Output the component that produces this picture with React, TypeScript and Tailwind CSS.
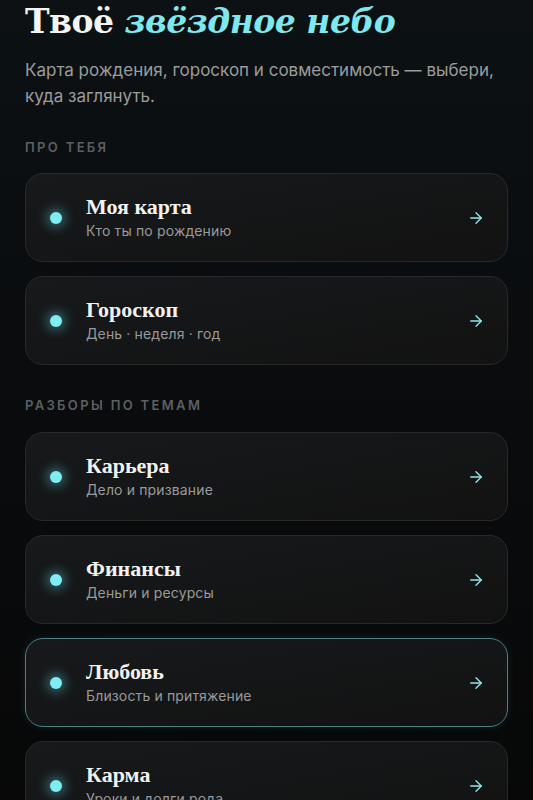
import { ArrowRight } from "lucide-react";

type Item = { title: string; sub: string; active?: boolean };

const aboutYou: Item[] = [
  { title: "Моя карта", sub: "Кто ты по рождению" },
  { title: "Гороскоп", sub: "День · неделя · год" },
];

const topics: Item[] = [
  { title: "Карьера", sub: "Дело и призвание" },
  { title: "Финансы", sub: "Деньги и ресурсы" },
  { title: "Любовь", sub: "Близость и притяжение", active: true },
  { title: "Карма", sub: "Уроки и долги рода" },
];

const serif = "font-['Liberation_Serif',_'Times_New_Roman',_serif]";

const Card = ({ item }: { item: Item }) => (
  <div
    className={
      "flex h-[89px] items-center rounded-[18px] bg-gradient-to-br from-[#17191b] to-[#121212] pl-6 pr-[22px] " +
      (item.active
        ? "border-[1.5px] border-[#4d7f83] shadow-[0_0_8px_rgba(90,200,210,0.12)]"
        : "border border-[#27292b]")
    }
  >
    <div className="h-3 w-3 shrink-0 rounded-full bg-[#7eeef4] shadow-[0_0_12px_3px_rgba(100,225,235,0.45)]" />
    <div className="ml-6 flex flex-1 flex-col">
      <span className={serif + " text-[22px] font-bold leading-[26px] text-[#f2f2f2]"}>
        {item.title}
      </span>
      <span className="mt-[1px] text-[14px] leading-[20px] tracking-[0.01em] text-[#9a9a9a]">
        {item.sub}
      </span>
    </div>
    <ArrowRight size={18} strokeWidth={1.8} className="text-[#8ee9ef]" />
  </div>
);

const Label = ({ children }: { children: string }) => (
  <div className="text-[13px] font-semibold uppercase leading-4 tracking-[0.18em] text-[#5c6063]">
    {children}
  </div>
);

export default function App() {
  return (
    <div className="min-h-screen bg-[linear-gradient(180deg,#0c1114_0%,#0a0c0e_40%,#070707_100%)] px-[25px] pt-[2px] pb-10 font-['Inter',_'Liberation_Sans',_sans-serif]">
      <h1 className="font-['DejaVu_Serif',_Georgia,_serif] text-[33px] font-bold leading-[40px] tracking-[-0.015em] text-[#f4f4f4]">
        Твоё <span className="italic text-[#7ee8ee]">звёздное небо</span>
      </h1>
      <p className="mt-[15px] text-[17px] leading-[26px] text-[#9c9c9c]">
        Карта рождения, гороскоп и совместимость — выбери,
        <br />
        куда заглянуть.
      </p>

      <div className="mt-[30px]">
        <Label>Про тебя</Label>
      </div>
      <div className="mt-[18px] flex flex-col gap-[14px]">
        {aboutYou.map((it) => (
          <Card key={it.title} item={it} />
        ))}
      </div>

      <div className="mt-8">
        <Label>Разборы по темам</Label>
      </div>
      <div className="mt-[19px] flex flex-col gap-[14px]">
        {topics.map((it) => (
          <Card key={it.title} item={it} />
        ))}
      </div>
    </div>
  );
}
